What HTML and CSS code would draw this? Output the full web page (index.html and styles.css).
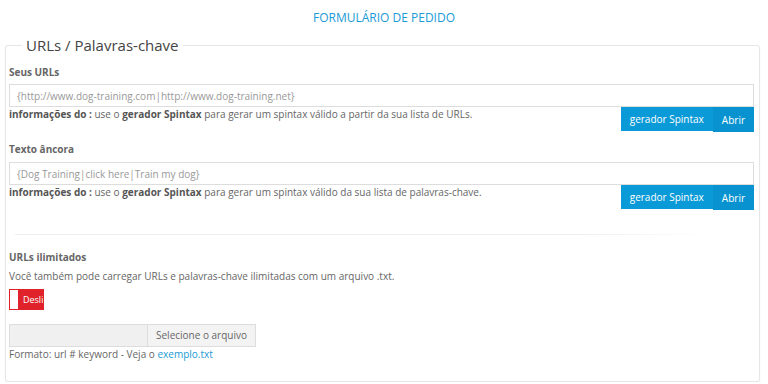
FILE: index.html
```html
<!DOCTYPE html>
<html lang="pt">

<head>
    <meta charset="UTF-8">
    <meta name="viewport" content="width=device-width, initial-scale=1.0">
    <title>Formulário de pedido</title>
    <link rel="stylesheet" href="styles.css">
</head>

<body>
    <h1 class="page-title">FORMULÁRIO DE PEDIDO</h1>

    <div class="box">
        <div class="box-head">
            <h2 class="box-title">URLs / Palavras-chave</h2>
        </div>

        <div class="field">
            <label for="urls">Seus URLs</label>
            <input id="urls" type="text" placeholder="{http://www.dog-training.com|http://www.dog-training.net}">
            <div class="help-row">
                <p class="help"><b>informações do :</b> use o <b>gerador Spintax</b> para gerar um spintax válido a partir da sua lista de URLs.</p>
                <div class="btn-group">
                    <button type="button" class="btn">gerador Spintax</button>
                    <button type="button" class="btn btn-open">Abrir</button>
                </div>
            </div>
        </div>

        <div class="field">
            <label for="anchors">Texto âncora</label>
            <input id="anchors" type="text" placeholder="{Dog Training|click here|Train my dog}">
            <div class="help-row">
                <p class="help"><b>informações do :</b> use o <b>gerador Spintax</b> para gerar um spintax válido da sua lista de palavras-chave.</p>
                <div class="btn-group">
                    <button type="button" class="btn">gerador Spintax</button>
                    <button type="button" class="btn btn-open">Abrir</button>
                </div>
            </div>
        </div>

        <hr class="divider">

        <div class="upload">
            <h3>URLs ilimitados</h3>
            <p class="text">Você também pode carregar URLs e palavras-chave ilimitadas com um arquivo .txt.</p>
            <div class="toggle"><span class="toggle-knob"></span><span class="toggle-label">Desligado</span></div>
            <div class="file-input">
                <span class="file-name"></span>
                <span class="file-btn">Selecione o arquivo</span>
            </div>
            <p class="text format">Formato: url # keyword - Veja o <a href="#">exemplo.txt</a></p>
        </div>
    </div>
</body>

</html>
```

FILE: styles.css
```css
body {
    margin: 0;
    padding: 0;
    background: #fff;
    font-family: "Open Sans", Arial, sans-serif;
    font-size: 10px;
    color: #666;
}

.page-title {
    margin: 0;
    padding: 10px 0 10px;
    text-align: center;
    font-size: 12px;
    font-weight: normal;
    color: #1a9ad6;
    line-height: 16px;
}

.box {
    margin: 9px 8px 0 5px;
    padding: 0 5px 20px 3px;
    border: 1px solid #e6e6e6;
    border-radius: 3px;
    box-shadow: 0 1px 2px rgba(0, 0, 0, 0.06);
    background: #fff;
}

.box-head {
    display: flex;
    margin: -11px 0 1px;
    padding-left: 13px;
}

.box-title {
    margin: 0;
    padding: 0 4px;
    background: #fff;
    font-size: 15px;
    font-weight: normal;
    color: #444;
    line-height: 20px;
}

.field label {
    display: block;
    margin-top: 10px;
    font-weight: bold;
    line-height: 14px;
    color: #666;
}

.field input {
    display: block;
    box-sizing: border-box;
    width: 100%;
    height: 23px;
    margin-top: 5px;
    padding: 0 7px;
    border: 1px solid #ddd;
    background: #fff;
    font-family: inherit;
    font-size: 10px;
}

.field + .field input {
    margin-top: 6px;
}

.field input::placeholder {
    color: #999;
}

.help-row {
    display: flex;
    justify-content: space-between;
    align-items: flex-start;
    margin-bottom: 8px;
}

.help {
    margin: 0;
    line-height: 14px;
}

.help b {
    color: #555;
}

.btn-group {
    display: flex;
}

.btn {
    height: 24px;
    padding: 0 9px;
    border: none;
    background: #0a9ad8;
    color: #fff;
    font-family: inherit;
    font-size: 10px;
    cursor: pointer;
}

.btn-open {
    height: 25px;
    background: #0893d0;
}

.divider {
    margin: 24px 40px 15px 6px;
    border: none;
    height: 1px;
    background: linear-gradient(to right, #eee, #eee 80%, rgba(238, 238, 238, 0));
}

.upload h3 {
    margin: 0;
    font-size: 10px;
    font-weight: bold;
    line-height: 14px;
    color: #666;
}

.text {
    margin: 5px 0 0;
    line-height: 14px;
}

.toggle {
    display: flex;
    width: 35px;
    height: 21px;
    margin-top: 6px;
    overflow: hidden;
    background: #e0232a;
    border: 1px solid #e0232a;
    box-sizing: border-box;
}

.toggle-knob {
    flex: none;
    width: 8px;
    background: #fff;
}

.toggle-label {
    padding-left: 5px;
    color: #fff;
    font-size: 9px;
    line-height: 19px;
}

.file-input {
    display: flex;
    width: 247px;
    height: 23px;
    margin-top: 14px;
    border: 1px solid #ddd;
    box-sizing: border-box;
}

.file-name {
    flex: 1;
    background: #f0f0f0;
}

.file-btn {
    width: 107px;
    border-left: 1px solid #ddd;
    background: #f3f3f3;
    color: #666;
    font-size: 10px;
    text-align: center;
    line-height: 21px;
}

.text.format {
    margin-top: 0;
}

a {
    color: #1a9ad6;
    text-decoration: none;
}
```
